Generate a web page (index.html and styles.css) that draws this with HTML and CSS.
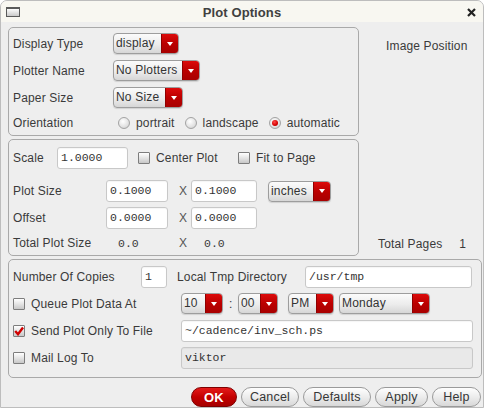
FILE: index.html
```html
<!DOCTYPE html>
<html>
<head>
<meta charset="utf-8">
<title>Plot Options</title>
<link rel="stylesheet" href="styles.css">
</head>
<body>
<div class="window">
  <div class="titlebar">
    <div class="tb-left"><span class="win-icon"></span></div>
    <div class="title">Plot Options</div>
    <div class="tb-right">
      <svg class="close" width="9" height="9" viewBox="0 0 9 9"><path d="M1 1 L8 8 M8 1 L1 8" stroke="#222" stroke-width="2.2" fill="none"/></svg>
    </div>
  </div>
  <div class="content">
    <div class="upper">
      <div class="groups">
        <div class="group g1">
          <div class="row r-combo">
            <span class="lbl w100">Display Type</span>
            <div class="combo c-display"><span class="val">display</span><span class="arr"></span></div>
          </div>
          <div class="row r-combo mt6">
            <span class="lbl w100">Plotter Name</span>
            <div class="combo c-plotter"><span class="val">No Plotters</span><span class="arr"></span></div>
          </div>
          <div class="row r-combo mt6">
            <span class="lbl w100">Paper Size</span>
            <div class="combo c-paper"><span class="val">No Size</span><span class="arr"></span></div>
          </div>
          <div class="row r-orient">
            <span class="lbl w100">Orientation</span>
            <label class="radio first"><span class="rb"></span><span>portrait</span></label>
            <label class="radio"><span class="rb"></span><span>landscape</span></label>
            <label class="radio"><span class="rb on"></span><span>automatic</span></label>
          </div>
        </div>
        <div class="group g2">
          <div class="row r-scale">
            <span class="lbl w44">Scale</span>
            <div class="inp w71">1.0000</div>
            <label class="check c-center"><span class="cb"></span><span>Center Plot</span></label>
            <label class="check"><span class="cb"></span><span>Fit to Page</span></label>
          </div>
          <div class="row r-plot">
            <span class="lbl w93">Plot Size</span>
            <div class="inp w62">0.1000</div>
            <span class="xcol">X</span>
            <div class="inp w66">0.1000</div>
            <div class="combo c-inches"><span class="val">inches</span><span class="arr"></span></div>
          </div>
          <div class="row r-offset">
            <span class="lbl w93">Offset</span>
            <div class="inp w62">0.0000</div>
            <span class="xcol">X</span>
            <div class="inp w66">0.0000</div>
          </div>
          <div class="row r-total">
            <span class="lbl w93">Total Plot Size</span>
            <span class="mono t1">0.0</span>
            <span class="xcol">X</span>
            <span class="mono t2">0.0</span>
          </div>
        </div>
      </div>
      <div class="side">
        <div class="img-pos">Image Position</div>
        <div class="total-pages"><span>Total Pages</span><span class="pages-num">1</span></div>
      </div>
    </div>
    <div class="group g3">
      <div class="row r-copies">
        <span class="lbl w128">Number Of Copies</span>
        <div class="inp w26">1</div>
        <span class="lbl tmp-lbl">Local Tmp Directory</span>
        <div class="inp w167">/usr/tmp</div>
      </div>
      <div class="row r-queue">
        <label class="check w168"><span class="cb"></span><span>Queue Plot Data At</span></label>
        <div class="combo c-hour"><span class="val">10</span><span class="arr"></span></div>
        <span class="colon">:</span>
        <div class="combo c-min"><span class="val">00</span><span class="arr"></span></div>
        <div class="combo c-ampm"><span class="val">PM</span><span class="arr"></span></div>
        <div class="combo c-day"><span class="val">Monday</span><span class="arr"></span></div>
      </div>
      <div class="row r-send">
        <label class="check w168"><span class="cb checked"><svg width="10" height="10" viewBox="0 0 10 10"><path d="M1.2 5 L4 8.2 L9 1.5" stroke="#d00000" stroke-width="2.4" fill="none" stroke-linejoin="miter"/></svg></span><span>Send Plot Only To File</span></label>
        <div class="inp w292">~/cadence/inv_sch.ps</div>
      </div>
      <div class="row r-mail">
        <label class="check w168"><span class="cb"></span><span>Mail Log To</span></label>
        <div class="inp w292 disabled">viktor</div>
      </div>
    </div>
    <div class="buttons">
      <button class="btn ok b-ok">OK</button>
      <button class="btn b-cancel">Cancel</button>
      <button class="btn b-defaults">Defaults</button>
      <button class="btn b-apply">Apply</button>
      <button class="btn b-help">Help</button>
    </div>
  </div>
</div>
</body>
</html>
```
FILE: styles.css
```css
html, body {
  margin: 0;
  padding: 0;
  background: #ffffff;
}
body {
  font-family: "Liberation Sans", Arial, sans-serif;
  font-size: 12px;
  letter-spacing: 0.15px;
  color: #3a3a3a;
}
.window {
  width: 484px;
  height: 408px;
  box-sizing: border-box;
  border: 1px solid #bdbdbd;
  border-radius: 7px 7px 0 0;
  background: #eeeeee;
  overflow: hidden;
}
.titlebar {
  height: 21px;
  background: #f8f7f1;
  display: grid;
  grid-template-columns: 1fr auto 1fr;
  align-items: center;
}
.tb-left {
  display: flex;
  align-items: center;
  padding-left: 5px;
}
.win-icon {
  display: block;
  width: 14px;
  height: 10px;
  box-sizing: border-box;
  border: 1px solid #5a5a5a;
  border-top-width: 2px;
  background: linear-gradient(#fdfdfd, #c9c9c9);
  margin-top: 1px;
}
.title {
  font-weight: bold;
  font-size: 13px;
  letter-spacing: 0.1px;
  color: #404040;
  padding-top: 1px;
}
.tb-right {
  display: flex;
  justify-content: flex-end;
  padding-right: 7px;
}
.close {
  display: block;
  margin-top: 1px;
}
.content {
  padding: 5px 0 0 7px;
}
.upper {
  display: flex;
}
.groups {
  display: flex;
  flex-direction: column;
  gap: 3px;
}
.group {
  box-sizing: border-box;
  border: 1px solid #a9a9a9;
  border-radius: 5px;
  padding-left: 4px;
}
.g1 {
  width: 351px;
  height: 109px;
  padding-top: 5px;
}
.g2 {
  width: 351px;
  height: 117px;
  padding-top: 7px;
}
.g3 {
  width: 474px;
  height: 119px;
  margin-top: 3px;
  padding-top: 6px;
}
.row {
  display: flex;
  align-items: center;
}
.lbl {
  white-space: nowrap;
  flex: none;
}
.w100 { width: 100px; }
.w44 { width: 44px; }
.w93 { width: 93px; }
.w128 { width: 128px; }
.w168 { width: 168px; }
.r-combo { height: 21px; }
.mt6 { margin-top: 6px; }
.r-orient {
  height: 20px;
  margin-top: 5px;
}
.combo {
  display: flex;
  flex: none;
  height: 21px;
  box-sizing: border-box;
  border: 1px solid #9d9d9d;
  border-radius: 4px;
  background: linear-gradient(#fbfbfb, #ececec 55%, #d6d6d6);
  box-shadow: 0 1px 1px rgba(0, 0, 0, 0.12);
  overflow: hidden;
}
.combo .val {
  flex: 1;
  padding-left: 2px;
  line-height: 18px;
  white-space: nowrap;
  color: #333;
  font-size: 12px;
  letter-spacing: 0.2px;
}
.combo .arr {
  width: 16px;
  flex: none;
  background: linear-gradient(#dc0b0b, #bb0000 50%, #a80000);
  border-left: 1px solid #8e0000;
  display: flex;
  align-items: center;
  justify-content: center;
}
.combo .arr::after {
  content: "";
  width: 0;
  height: 0;
  border-left: 3.5px solid transparent;
  border-right: 3.5px solid transparent;
  border-top: 4px solid #ffffff;
}
.c-display { width: 66px; }
.c-plotter { width: 87px; }
.c-paper { width: 70px; }
.c-inches { width: 63px; margin-left: 11px; }
.c-hour { width: 42px; }
.c-min { width: 40px; }
.c-ampm { width: 46px; margin-left: 10px; }
.c-day { width: 91px; margin-left: 5px; }
.radio {
  display: flex;
  align-items: center;
  gap: 6px;
  margin-left: 10px;
  white-space: nowrap;
}
.radio.first { margin-left: 5px; }
.rb {
  width: 12px;
  height: 12px;
  box-sizing: border-box;
  border-radius: 50%;
  border: 1px solid #a3a3a3;
  background: radial-gradient(circle at 40% 35%, #ffffff, #e2e2e2 60%, #c4c4c4);
  display: flex;
  align-items: center;
  justify-content: center;
}
.rb.on::after {
  content: "";
  width: 6px;
  height: 6px;
  border-radius: 50%;
  background: radial-gradient(circle at 40% 35%, #ff4a4a, #d40000 60%, #a00000);
}
.check {
  display: flex;
  align-items: center;
  gap: 6px;
  white-space: nowrap;
  flex: none;
}
.cb {
  width: 12px;
  height: 12px;
  box-sizing: border-box;
  border: 1px solid #7d7d7d;
  border-radius: 1px;
  background: linear-gradient(#ffffff, #e4e4e4 50%, #c8c8c8);
  display: flex;
  align-items: center;
  justify-content: center;
  flex: none;
}
.cb svg { display: block; }
.c-center {
  width: 100px;
  margin-left: 10px;
}
.inp {
  box-sizing: border-box;
  height: 22px;
  border: 1px solid #c8c8c8;
  border-radius: 3px;
  background: #ffffff;
  font-family: "Liberation Mono", "Courier New", monospace;
  font-size: 11.5px;
  letter-spacing: 0;
  line-height: 20px;
  padding-left: 3px;
  color: #333;
  white-space: nowrap;
  flex: none;
  box-shadow: inset 0 1px 1px rgba(0, 0, 0, 0.04);
}
.inp.disabled {
  background: #e9e9e9;
}
.w71 { width: 71px; }
.w62 { width: 62px; }
.w66 { width: 66px; }
.w26 { width: 26px; }
.w167 { width: 167px; }
.w292 { width: 292px; }
.r-scale { height: 22px; }
.r-plot { height: 22px; margin-top: 11px; }
.r-offset { height: 22px; margin-top: 5px; }
.r-total { height: 20px; margin-top: 4px; }
.xcol {
  width: 23px;
  box-sizing: border-box;
  padding-left: 11px;
  color: #555;
  flex: none;
}
.mono {
  font-family: "Liberation Mono", "Courier New", monospace;
  font-size: 11.5px;
  letter-spacing: 0;
  flex: none;
}
.t1 {
  width: 62px;
  box-sizing: border-box;
  padding-left: 12px;
}
.t2 {
  padding-left: 13px;
}
.side {
  flex: 1;
  display: flex;
  flex-direction: column;
  justify-content: space-between;
  padding-bottom: 2px;
}
.img-pos {
  padding-left: 27px;
  margin-top: 12px;
  line-height: 14px;
}
.total-pages {
  height: 20px;
  display: flex;
  align-items: center;
  padding-left: 19px;
}
.pages-num {
  margin-left: 17px;
}
.r-copies { height: 22px; }
.tmp-lbl {
  width: 128px;
  margin-left: 10px;
}
.r-queue { height: 21px; margin-top: 5px; }
.r-send { height: 22px; margin-top: 6px; }
.r-mail { height: 22px; margin-top: 5px; }
.colon {
  width: 15px;
  box-sizing: border-box;
  padding-left: 6px;
  flex: none;
}
.buttons {
  width: 474px;
  margin-top: 9px;
  display: flex;
  justify-content: flex-end;
  gap: 4px;
  padding-right: 1px;
  box-sizing: border-box;
}
.btn {
  height: 20px;
  box-sizing: border-box;
  border: 1px solid #9a9a9a;
  border-radius: 10px;
  background: linear-gradient(#fefefe, #ececec 50%, #d8d8d8);
  font-family: "Liberation Sans", Arial, sans-serif;
  font-size: 12.5px;
  letter-spacing: 0.2px;
  color: #363636;
  padding: 0;
  display: flex;
  align-items: center;
  justify-content: center;
}
.btn.ok {
  background: linear-gradient(#e41a1a, #c40000 50%, #a60000);
  border-color: #7e0000;
  color: #ffffff;
  font-weight: bold;
  font-size: 13px;
}
.b-ok { width: 46px; }
.b-cancel { width: 58px; }
.b-defaults { width: 68px; }
.b-apply { width: 53px; }
.b-help { width: 49px; }
```
